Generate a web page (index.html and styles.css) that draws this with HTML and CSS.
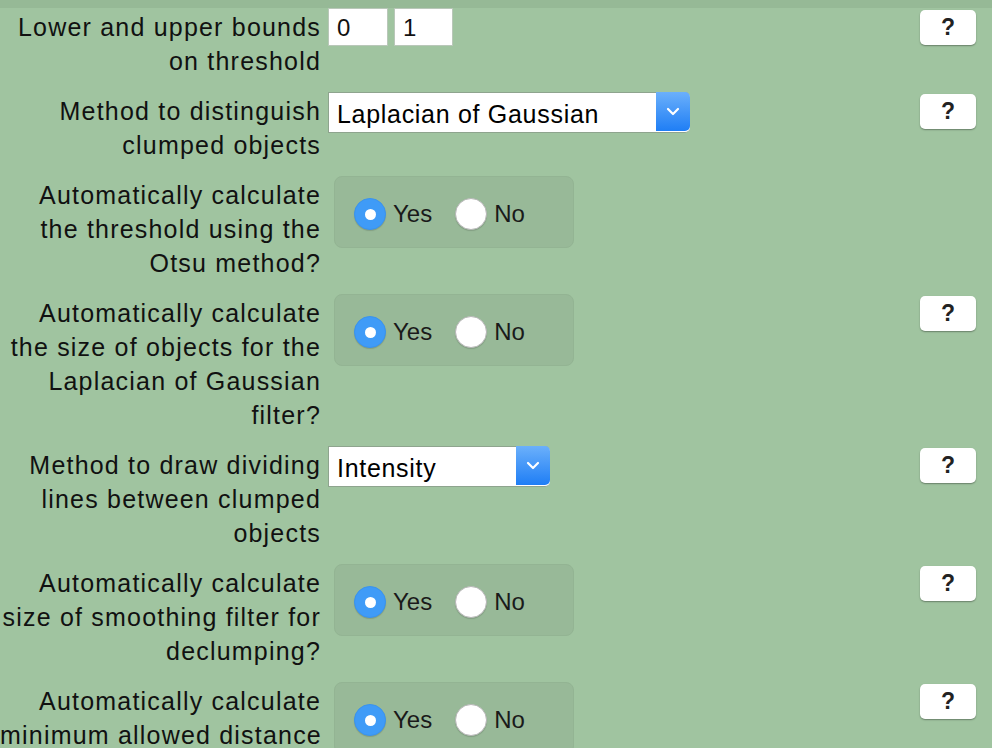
FILE: index.html
```html
<!DOCTYPE html>
<html>
<head>
<meta charset="utf-8">
<link rel="stylesheet" href="styles.css">
</head>
<body>
<div class="strip"></div>
<div class="form">
  <div class="label">Lower and upper bounds<br>on threshold</div>
  <div class="control"><span class="num">0</span><span class="num">1</span></div>
  <div class="help"><button class="qbtn">?</button></div>

  <div class="label">Method to distinguish<br>clumped objects</div>
  <div class="control"><div class="select wide"><span class="sel-text">Laplacian of Gaussian</span><span class="sel-btn"><svg width="14" height="9" viewBox="0 0 14 9"><path d="M2 2 L7 7 L12 2" fill="none" stroke="#fff" stroke-width="2.2" stroke-linecap="round" stroke-linejoin="round"/></svg></span></div></div>
  <div class="help"><button class="qbtn">?</button></div>

  <div class="label">Automatically calculate<br>the threshold using the<br>Otsu method?</div>
  <div class="control"><div class="radios"><span class="radio on"></span><span class="rlabel">Yes</span><span class="radio"></span><span class="rlabel">No</span></div></div>
  <div class="help"></div>

  <div class="label">Automatically calculate<br>the size of objects for the<br>Laplacian of Gaussian<br>filter?</div>
  <div class="control"><div class="radios"><span class="radio on"></span><span class="rlabel">Yes</span><span class="radio"></span><span class="rlabel">No</span></div></div>
  <div class="help"><button class="qbtn">?</button></div>

  <div class="label">Method to draw dividing<br>lines between clumped<br>objects</div>
  <div class="control"><div class="select narrow"><span class="sel-text">Intensity</span><span class="sel-btn"><svg width="14" height="9" viewBox="0 0 14 9"><path d="M2 2 L7 7 L12 2" fill="none" stroke="#fff" stroke-width="2.2" stroke-linecap="round" stroke-linejoin="round"/></svg></span></div></div>
  <div class="help"><button class="qbtn">?</button></div>

  <div class="label">Automatically calculate<br>size of smoothing filter for<br>declumping?</div>
  <div class="control"><div class="radios"><span class="radio on"></span><span class="rlabel">Yes</span><span class="radio"></span><span class="rlabel">No</span></div></div>
  <div class="help"><button class="qbtn">?</button></div>

  <div class="label">Automatically calculate<br>minimum allowed distance<br>between peaks?</div>
  <div class="control"><div class="radios"><span class="radio on"></span><span class="rlabel">Yes</span><span class="radio"></span><span class="rlabel">No</span></div></div>
  <div class="help"><button class="qbtn">?</button></div>
</div>
</body>
</html>
```
FILE: styles.css
```css
html, body {
  margin: 0;
  padding: 0;
  background: #a0c4a0;
  height: 748px;
  overflow: hidden;
}
body {
  font-family: "Liberation Sans", Arial, sans-serif;
  color: #111;
  font-size: 25px;
}
.strip {
  height: 8px;
  background: #96b996;
}
.form {
  display: grid;
  grid-template-columns: 320px 1fr 56px;
  column-gap: 8px;
  row-gap: 14px;
  padding: 0 16px 0 0;
}
.label {
  text-align: right;
  line-height: 34px;
  white-space: nowrap;
  padding-top: 2px;
  letter-spacing: 1.2px;
  margin-right: -1px;
}
.control {
  display: flex;
  align-items: flex-start;
  gap: 6px;
}
.num {
  display: block;
  width: 50px;
  height: 36px;
  line-height: 38px;
  background: #fff;
  border: 1px solid #b9c7b9;
  padding-left: 8px;
  font-size: 24px;
  letter-spacing: 0.5px;
}
.num + .num { width: 49px; }
.select {
  display: flex;
  height: 39px;
  background: #fff;
  border: 1px solid #8ea48e;
  border-right: none;
  border-radius: 0 5px 5px 0;
}
.select.wide { width: 361px; }
.select.narrow { width: 221px; }
.sel-text {
  flex: 1;
  line-height: 42px;
  padding-left: 8px;
  color: #000;
  letter-spacing: 0.7px;
}
.sel-btn {
  width: 34px;
  height: 39px;
  margin-top: -1px;
  border-radius: 0 5px 5px 0;
  background: linear-gradient(#6bb0fb, #1f7ef5);
  display: flex;
  align-items: center;
  justify-content: center;
}
.radios {
  margin-left: 6px;
  width: 240px;
  height: 72px;
  box-sizing: border-box;
  background: #98b998;
  border: 1px solid #93b493;
  border-radius: 8px;
  display: flex;
  align-items: center;
  padding-left: 19px;
  padding-top: 4px;
}
.radio {
  width: 32px;
  height: 32px;
  flex: none;
  border-radius: 50%;
  background: #fff;
  box-sizing: border-box;
  border: 1px solid #b7b7b7;
  box-shadow: 0 1px 1px rgba(0,0,0,0.15);
  position: relative;
}
.radio.on {
  background: #3f9bf7;
  border-color: #3a93ee;
}
.radio.on::after {
  content: "";
  position: absolute;
  left: 10px;
  top: 10px;
  width: 11px;
  height: 11px;
  border-radius: 50%;
  background: #fff;
}
.rlabel {
  font-size: 24px;
  margin-left: 7px;
  margin-right: 23px;
  color: #1a1a1a;
}
.help {
  display: flex;
  justify-content: flex-end;
}
.qbtn {
  width: 56px;
  height: 35px;
  margin-top: 2px;
  background: #fff;
  border: none;
  border-radius: 5px;
  box-shadow: 0 1px 1.5px rgba(0,0,0,0.35);
  font-family: "Liberation Sans", Arial, sans-serif;
  font-size: 23px;
  font-weight: bold;
  color: #222;
  padding: 0;
}
```
